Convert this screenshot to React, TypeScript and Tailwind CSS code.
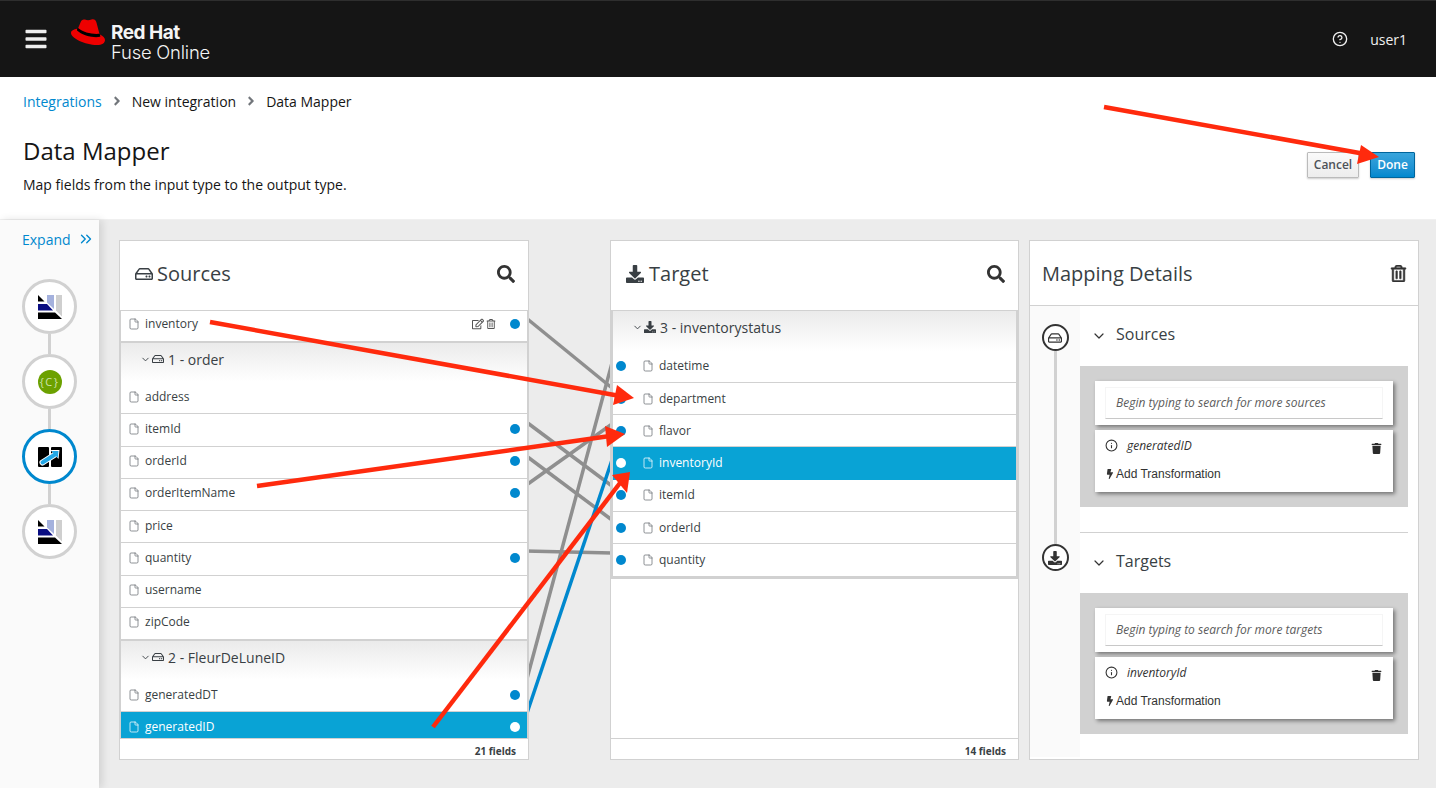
import React from "react";
import {
  FaBars, FaAngleRight, FaSearch, FaRegHdd, FaDownload, FaRegEdit,
  FaRegTrashAlt, FaTrash, FaBolt,
} from "react-icons/fa";
import { File, Info, CircleHelp, ChevronDown, ChevronsRight } from "lucide-react";

const Dot = ({ white }: { white?: boolean }) => (
  <span className={`block w-[10px] h-[10px] rounded-full shrink-0 ${white ? "bg-white" : "bg-[#0088ce]"}`} />
);

const FileIcon = ({ selected }: { selected?: boolean }) => (
  <File size={12} strokeWidth={1.5} className={`shrink-0 ${selected ? "text-white" : "text-[#6a6e73]"}`} />
);

function SourceRow({ name, dot, selected, h = "h-[32.25px]" }: { name: string; dot?: boolean; selected?: boolean; h?: string }) {
  return (
    <div className={`${h} shrink-0 flex items-center pl-[7px] pr-[7px] pb-[2px] gap-[5px] text-[12px] border-b ${selected ? "bg-[#09a3d5] text-white border-[#09a3d5]" : "bg-white text-[#393f44] border-[#d1d1d1]"}`}>
      <FileIcon selected={selected} />
      <span className="flex-1">{name}</span>
      {dot && <Dot white={selected} />}
    </div>
  );
}

function TargetRow({ name, dot = true, selected }: { name: string; dot?: boolean; selected?: boolean }) {
  return (
    <div className={`h-[32.3px] shrink-0 flex items-center pl-[3px] text-[12px] border-b ${selected ? "bg-[#09a3d5] text-white border-[#09a3d5] font-medium" : "bg-white text-[#393f44] border-[#d1d1d1]"}`}>
      <Dot white={selected} />
      <span className="ml-[16px] mr-[5px]"><FileIcon selected={selected} /></span>
      <span>{name}</span>
    </div>
  );
}

function GroupHeader({ label, target, h = "h-[39px]" }: { label: string; target?: boolean; h?: string }) {
  return (
    <div className={`${h} shrink-0 flex items-center pl-[19px] pb-[7px] gap-[1px] text-[14px] text-[#393f44] bg-gradient-to-b from-[#ebebeb] to-white`}>
      <ChevronDown size={11} strokeWidth={2} className="text-[#393f44]" />
      {target ? <FaDownload size={12} className="mr-[3px]" /> : <FaRegHdd size={12} className="mr-[3px]" />}
      <span>{label}</span>
    </div>
  );
}

function PanelTitle({ icon, title }: { icon: React.ReactNode; title: string }) {
  return (
    <div className="h-[69px] shrink-0 flex items-center justify-between pl-[15px] pr-[13px] bg-white">
      <div className="flex items-center gap-[4px] text-[20px] text-[#393f44] pb-[4px]">
        {icon}
        <span>{title}</span>
      </div>
      <FaSearch size={18} className="text-[#333] mb-[3px]" />
    </div>
  );
}

const Footer = ({ text }: { text: string }) => (
  <div className="h-[21px] shrink-0 border-t border-[#d1d1d1] bg-white flex items-center justify-end pr-[12px] pt-[5px] text-[10px] font-bold text-[#393f44]">
    {text}
  </div>
);

function SourcesPanel() {
  const order: [string, boolean][] = [
    ["address", false], ["itemId", true], ["orderId", true], ["orderItemName", true],
    ["price", false], ["quantity", true], ["username", false], ["zipCode", false],
  ];
  return (
    <div className="relative w-[410px] h-[520px] border border-[#d1d1d1] bg-white flex flex-col">
      <PanelTitle icon={<FaRegHdd size={18} className="text-[#393f44]" />} title="Sources" />
      <div className="flex-1 min-h-0 overflow-hidden flex flex-col border-x border-t border-[#d1d1d1]">
        <div className="h-[32px] shrink-0 flex items-center pl-[7px] pr-[7px] pb-[4px] gap-[5px] text-[12px] text-[#393f44] border-b-2 border-[#d1d1d1]">
          <FileIcon />
          <span className="flex-1">inventory</span>
          <FaRegEdit size={12} className="text-[#555] -mr-[3px]" />
          <FaRegTrashAlt size={10} className="text-[#555] mr-[9px]" />
          <Dot />
        </div>
        <GroupHeader label="1 - order" />
        {order.map(([n, d]) => <SourceRow key={n} name={n} dot={d} />)}
        <div className="h-[1px] shrink-0 bg-[#d1d1d1]" />
        <GroupHeader label="2 - FleurDeLuneID" />
        <SourceRow name="generatedDT" dot h="h-[32px]" />
        <SourceRow name="generatedID" dot selected h="h-[32px]" />
      </div>
      <Footer text="21 fields" />
    </div>
  );
}

function TargetPanel() {
  return (
    <div className="relative w-[409px] h-[520px] border border-[#d1d1d1] bg-white flex flex-col ml-[81px]">
      <PanelTitle icon={<FaDownload size={18} className="text-[#393f44] mr-[1px]" />} title="Target" />
      <div className="flex-1 min-h-0 bg-white">
        <div className="border-2 border-t border-[#d1d1d1] border-r-[#d1d1d1] flex flex-col">
          <GroupHeader label="3 - inventorystatus" target h="h-[39.6px]" />
          <TargetRow name="datetime" />
          <TargetRow name="department" />
          <TargetRow name="flavor" />
          <TargetRow name="inventoryId" selected />
          <TargetRow name="itemId" />
          <TargetRow name="orderId" />
          <TargetRow name="quantity" />
        </div>
      </div>
      <Footer text="14 fields" />
    </div>
  );
}

function MappingCard({ placeholder, field }: { placeholder: string; field: string }) {
  return (
    <div className="bg-[#d1d1d1] p-[15px] flex flex-col gap-[5px]">
      <div className="h-[44px] bg-white px-[10px] pt-[6px] shadow-[2px_2px_4px_rgba(0,0,0,0.45)]">
        <div className="h-[32px] border border-[#f5f5f5] border-b-[#c8c8c8] flex items-center pl-[10px] text-[12px] italic text-[#5c5c5c]">
          {placeholder}
        </div>
      </div>
      <div className="h-[62px] bg-white px-[10px] pt-[8px] shadow-[2px_2px_4px_rgba(0,0,0,0.45)]">
        <div className="flex items-center h-[16px] text-[12px] italic text-[#333]">
          <Info size={13} strokeWidth={2} className="text-[#333] mr-[9px] -mt-[1px]" />
          <span className="flex-1 -mt-[1px]">{field}</span>
          <FaTrash size={11} className="text-[#2b2b2b] mr-[1px] mt-[4px]" />
        </div>
        <div className="flex items-center mt-[12px] h-[16px] text-[12px] text-[#333] font-['Liberation_Sans',Arial,sans-serif]">
          <FaBolt size={10} className="text-[#333] mr-[1px]" />
          <span>Add Transformation</span>
        </div>
      </div>
    </div>
  );
}

function Section({ title, placeholder, field }: { title: string; placeholder: string; field: string }) {
  return (
    <div>
      <div className="h-[60px] flex items-center pl-[11px] pb-[4px] text-[16px] text-[#393f44]">
        <ChevronDown size={16} strokeWidth={1.8} className="text-[#333] mr-[9px] mt-[4px]" />
        <span>{title}</span>
      </div>
      <MappingCard placeholder={placeholder} field={field} />
    </div>
  );
}

function TimelineNode({ children }: { children: React.ReactNode }) {
  return (
    <div className="w-[27px] h-[27px] rounded-full border-2 border-[#333] bg-white flex items-center justify-center text-[#333] shrink-0">
      {children}
    </div>
  );
}

function MappingPanel() {
  return (
    <div className="relative w-[390px] h-[520px] border border-[#d1d1d1] bg-white flex flex-col ml-[10px]">
      <div className="h-[65px] shrink-0 border-b border-[#d1d1d1] flex items-center justify-between pl-[12px] pr-[11px] pt-[1px] text-[20px] text-[#393f44]">
        <span>Mapping Details</span>
        <FaRegTrashAlt size={17} stroke="currentColor" strokeWidth={16} className="text-[#333]" />
      </div>
      <div className="flex-1 min-h-0 flex">
        <div className="w-[50px] h-[451px] bg-[#fafafa] flex flex-col items-center pt-[18px]">
          <TimelineNode><FaRegHdd size={14} /></TimelineNode>
          <div className="w-[3px] h-[193px] bg-[#d1d1d1]" />
          <TimelineNode><FaDownload size={14} /></TimelineNode>
        </div>
        <div className="flex-1 pr-[10px]">
          <Section title="Sources" placeholder="Begin typing to search for more sources" field="generatedID" />
          <div className="h-[1px] bg-[#d1d1d1] mt-[25px]" />
          <Section title="Targets" placeholder="Begin typing to search for more targets" field="inventoryId" />
        </div>
      </div>
    </div>
  );
}

function ExtensionIcon() {
  return (
    <svg width="24" height="24" viewBox="0 0 24 24">
      <polygon points="18,0 24,0 24,21.5 18,15.5" fill="#cfcfcf" />
      <polygon points="9,0 16,0 16,14 9,7.5" fill="#a4b1dd" />
      <polygon points="0,0 6.5,6.5 0,6.5" fill="#000" />
      <polygon points="0,9 9,9 15,15.5 0,15.5" fill="#0a0e82" />
      <polygon points="0,17.5 17,17.5 24,24 0,24" fill="#000" />
    </svg>
  );
}

function MapperIcon() {
  return (
    <svg width="24" height="20" viewBox="0 0 24 20">
      <rect x="0" y="0" width="11" height="20" rx="1" fill="#000" />
      <rect x="13" y="0" width="11" height="20" rx="1" fill="#000" />
      <path d="M4.5 15.5 L17 7.5" stroke="#fff" strokeWidth="6" strokeLinecap="round" />
      <polygon points="12.5,3 21.5,3 20.5,12" fill="#fff" />
      <path d="M4.5 15.5 L17 7.5" stroke="#22a7e6" strokeWidth="4" strokeLinecap="round" />
      <polygon points="13.5,4 20.5,4 19.8,11" fill="#22a7e6" />
    </svg>
  );
}

function Step({ active, children }: { active?: boolean; children: React.ReactNode }) {
  return (
    <div className={`w-[55px] h-[55px] rounded-full bg-white border-[3px] flex items-center justify-center shrink-0 ${active ? "border-[#0088ce]" : "border-[#d1d1d1]"}`}>
      {children}
    </div>
  );
}

const Connector = () => <div className="w-[3px] h-[20px] bg-[#d1d1d1] shrink-0" />;

function Sidebar() {
  return (
    <div className="w-[99px] shrink-0 bg-[#fafafa] shadow-[3px_0_8px_rgba(0,0,0,0.12)] flex flex-col items-center z-10 relative">
      <div className="h-[59px] w-full flex items-start pt-[9px] pl-[22px] text-[14px] text-[#0088ce]">
        <span>Expand</span>
        <ChevronsRight size={18} strokeWidth={1.8} className="ml-[6px] mt-[1px]" />
      </div>
      <Step><ExtensionIcon /></Step>
      <Connector />
      <Step>
        <div className="w-[24px] h-[24px] rounded-full bg-[#6ca100] flex items-center justify-center text-[11px] tracking-[1.5px] text-[#cfe3ad] leading-none">{"{C}"}</div>
      </Step>
      <Connector />
      <Step active><MapperIcon /></Step>
      <Connector />
      <Step><ExtensionIcon /></Step>
    </div>
  );
}

function Hat() {
  return (
    <svg width="34" height="26" viewBox="0 0 34 26" className="shrink-0">
      <path d="M7 9.5 L9.7 3 C10.4 1 12 0 14 .6 C16 1.3 18 1.4 20.5 .5 C23.5 -.3 25 1.5 25.6 4 L28.5 15 C21 16 12 14 7 9.5 Z" fill="#ee0000" />
      <path d="M7 9 C12 13.3 21 15.5 28.5 14.8 L29.2 17.6 C22 18.8 12 17 6 11.5 Z" fill="#000" />
      <path d="M6 9.8 C3 10.4 0 11.6 0 14 C0 19 14 26 26 26 C31 26 34 24 34 21 C34 19 32 17 29 15.5 L29.4 17.8 C22 19 12 17 6 11.5 Z" fill="#ee0000" />
    </svg>
  );
}

function Arrows() {
  return (
    <svg className="absolute left-0 top-0 z-20 pointer-events-none" width="1436" height="788">
      <g stroke="#ff2a0d" strokeWidth="4.5" fill="#ff2a0d">
        <line x1="210" y1="322" x2="620" y2="396" />
        <polygon stroke="none" points="634,398 617,385 613,405" />
        <line x1="257" y1="486" x2="610" y2="436" />
        <polygon stroke="none" points="625,434 605,426 607,447" />
        <line x1="433" y1="727" x2="620" y2="483" />
        <polygon stroke="none" points="630,472 612,475 627,493" />
        <line x1="1104" y1="107" x2="1365" y2="154" />
        <polygon stroke="none" points="1379,157 1361,145 1357,164" />
      </g>
    </svg>
  );
}

function Lines() {
  return (
    <svg className="absolute left-0 top-0 pointer-events-none" width="1436" height="569" viewBox="0 219 1436 569">
      <g fill="none" strokeWidth="3.5" stroke="#8f8f8f">
        <line x1="525" y1="316" x2="612" y2="387" />
        <line x1="525" y1="420" x2="612" y2="485" />
        <line x1="525" y1="454" x2="612" y2="519" />
        <line x1="525" y1="485" x2="612" y2="423" />
        <line x1="525" y1="550" x2="612" y2="552" />
        <line x1="525" y1="685" x2="612" y2="362" />
      </g>
      <line x1="525" y1="718" x2="612" y2="459" stroke="#0088ce" strokeWidth="3.5" />
    </svg>
  );
}

export default function App() {
  return (
    <div className="relative w-[1436px] h-[788px] overflow-hidden flex flex-col bg-white font-['Open_Sans','Noto_Sans',sans-serif] text-[#151515]">
      <header className="h-[77px] shrink-0 bg-[#151515] border-t border-[#2e2e2e] flex items-center pl-[24px] pr-[29px]">
        <FaBars size={24} className="text-[#ededed]" />
        <div className="ml-[23px] -mt-[14px]"><Hat /></div>
        <div className="ml-[6px] mt-[6px] flex flex-col text-[#f5f5f5] font-['Inter',sans-serif] leading-none">
          <span className="text-[19px] font-bold tracking-[-0.5px] leading-[20px]">Red Hat</span>
          <span className="text-[18.4px] font-light tracking-[-0.2px] leading-[19px]">Fuse Online</span>
        </div>
        <div className="ml-auto flex items-center text-[14px] text-[#f0f0f0]">
          <CircleHelp size={16} strokeWidth={2} />
          <span className="ml-[22px]">user1</span>
        </div>
      </header>

      <section className="h-[142px] shrink-0 bg-white px-[23px] relative">
        <nav className="flex items-center h-[48px] text-[14px]">
          <span className="text-[#0088ce]">Integrations</span>
          <FaAngleRight size={14} className="mx-[8px] text-[#72767b]" />
          <span>New integration</span>
          <FaAngleRight size={14} className="mx-[8px] text-[#72767b]" />
          <span>Data Mapper</span>
        </nav>
        <div className="flex items-end justify-between">
          <div>
            <h1 className="text-[24px] leading-[33px] mt-[9px]">Data Mapper</h1>
            <p className="text-[14px] leading-[19px] mt-[8px]">Map fields from the input type to the output type.</p>
          </div>
          <div className="flex items-center gap-[11px] -mr-[2px] mb-[16px]">
            <button className="w-[52px] h-[26px] text-[12px] font-semibold text-[#4d5258] border border-[#bbb] bg-gradient-to-b from-[#fafafa] to-[#ededed] rounded-[1px] shadow-[0_1px_2px_rgba(0,0,0,0.2)]">Cancel</button>
            <button className="w-[45px] h-[26px] text-[12px] font-semibold text-white border border-[#00659c] bg-gradient-to-b from-[#39a5dc] to-[#0088ce] rounded-[1px] shadow-[0_1px_2px_rgba(0,0,0,0.2)]">Done</button>
          </div>
        </div>
      </section>

      <main className="flex-1 min-h-0 flex bg-[#ececec] border-t border-[#f0f0f0]">
        <Sidebar />
        <div className="flex-1 relative">
          <div className="absolute -left-[99px] top-0"><Lines /></div>
          <div className="relative flex pl-[20px] pt-[20px]">
            <SourcesPanel />
            <TargetPanel />
            <MappingPanel />
          </div>
        </div>
      </main>

      <Arrows />
    </div>
  );
}
